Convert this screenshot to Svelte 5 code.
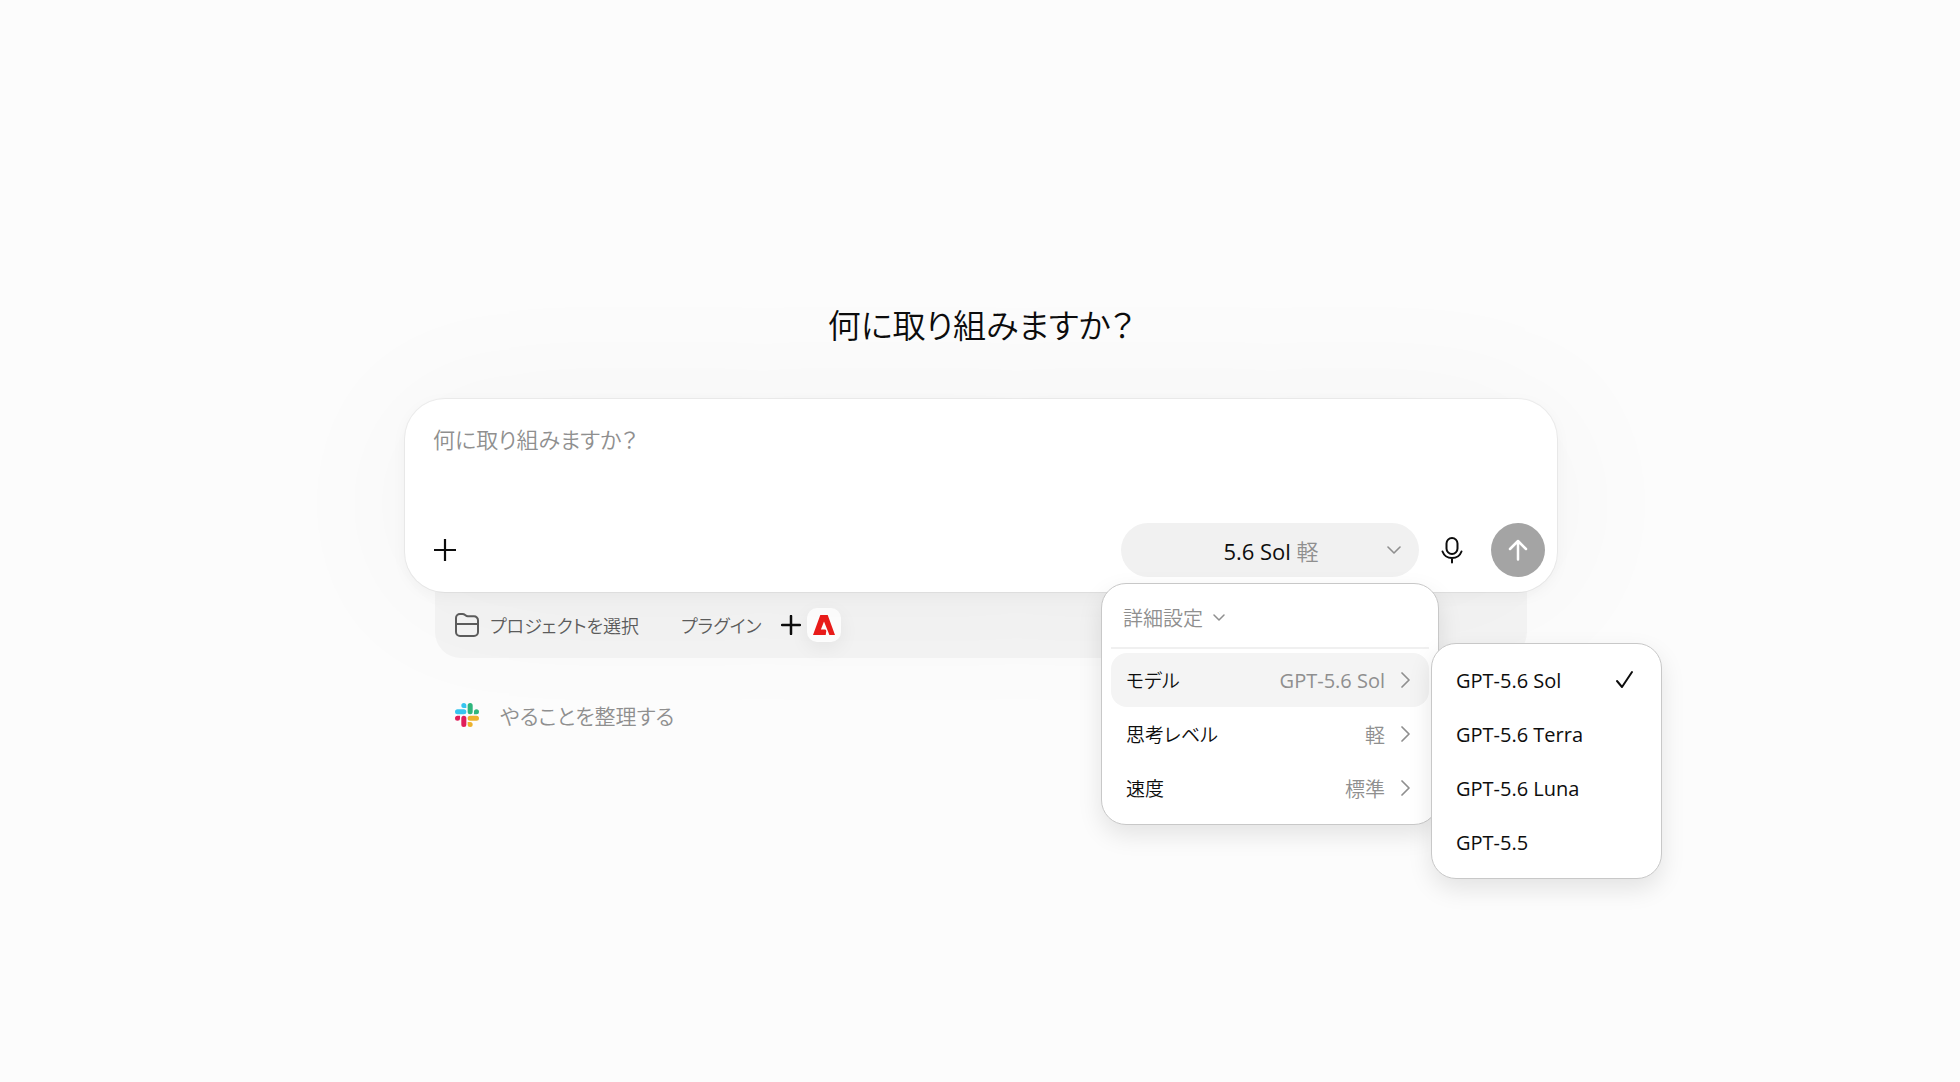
<script>
  const models = ['GPT-5.6 Sol', 'GPT-5.6 Terra', 'GPT-5.6 Luna', 'GPT-5.5'];

  let prompt = $state('');
  let menuOpen = $state(true);
  let activeRow = $state('model');
  let model = $state('GPT-5.6 Sol');

  // Rows of the settings menu
  let rows = $derived([
    { id: 'model', label: 'モデル', value: model },
    { id: 'effort', label: '思考レベル', value: '軽' },
    { id: 'speed', label: '速度', value: '標準' }
  ]);

  function toggleMenu() {
    menuOpen = !menuOpen;
  }

  function pickModel(name) {
    model = name;
  }
</script>

<main class="page">
  <h1>何に取り組みますか？</h1>

  <div class="composer">
    <form class="card" onsubmit={(e) => e.preventDefault()}>
      <textarea
        bind:value={prompt}
        rows="1"
        aria-label="何に取り組みますか？"
        placeholder="何に取り組みますか？"
      ></textarea>

      <div class="tools">
        <button type="button" class="icon-button" aria-label="追加">
          <svg width="24" height="24" viewBox="0 0 24 24">
            <path d="M12 1v22M1 12h22" stroke="currentColor" stroke-width="2.2" />
          </svg>
        </button>

        <div class="right">
          <div class="picker">
            <button type="button" class="pill" aria-expanded={menuOpen} onclick={toggleMenu}>
              <span class="pill-text">{model.replace('GPT-', '')} <span class="muted">軽</span></span>
              <svg class="pill-arrow" width="14" height="10" viewBox="0 0 14 10">
                <path d="M1 2l6 6 6-6" fill="none" stroke="currentColor" stroke-width="1.6" stroke-linecap="round" stroke-linejoin="round" />
              </svg>
            </button>

            {#if menuOpen}
              <div class="menu">
                <button type="button" class="menu-head">
                  詳細設定
                  <svg width="12" height="8" viewBox="0 0 12 8">
                    <path d="M1 1l5 5 5-5" fill="none" stroke="currentColor" stroke-width="1.5" stroke-linecap="round" stroke-linejoin="round" />
                  </svg>
                </button>
                <hr />
                {#each rows as row}
                  <button
                    type="button"
                    class="row"
                    class:active={activeRow === row.id}
                    onmouseenter={() => (activeRow = row.id)}
                  >
                    <span class="label">{row.label}</span>
                    <span class="value" class:model={row.id === 'model'}>{row.value}</span>
                    <svg width="10" height="18" viewBox="0 0 10 18">
                      <path d="M1 2l7 7-7 7" fill="none" stroke="currentColor" stroke-width="1.7" stroke-linecap="round" stroke-linejoin="round" />
                    </svg>
                  </button>
                {/each}

                {#if activeRow === 'model'}
                  <div class="menu submenu">
                    {#each models as name}
                      <button type="button" class="row" onclick={() => pickModel(name)}>
                        <span>{name}</span>
                        {#if name === model}
                          <svg class="check" width="20" height="20" viewBox="0 0 20 20">
                            <path d="M3 11l5 6L18 2" fill="none" stroke="currentColor" stroke-width="2" stroke-linecap="round" stroke-linejoin="round" />
                          </svg>
                        {/if}
                      </button>
                    {/each}
                  </div>
                {/if}
              </div>
            {/if}
          </div>

          <button type="button" class="icon-button" aria-label="音声入力">
            <svg width="24" height="28" viewBox="0 0 24 28" fill="none" stroke="currentColor" stroke-width="2" stroke-linecap="round">
              <rect x="6.5" y="2" width="11" height="16" rx="5.5" />
              <path d="M2.500 15.500c1.500 4 5 6.500 9.500 6.500s8-2.500 9.500-6.500M12 22v4.500" />
            </svg>
          </button>

          <button type="submit" class="send" aria-label="送信">
            <svg width="24" height="24" viewBox="0 0 24 24">
              <path d="M12 21.500V3M4 11l8-8 8 8" fill="none" stroke="currentColor" stroke-width="2.500" stroke-linecap="round" stroke-linejoin="round" />
            </svg>
          </button>
        </div>
      </div>
    </form>

    <div class="bar">
      <button type="button" class="bar-button">
        <svg width="26" height="26" viewBox="0 0 26 26" fill="none" stroke="currentColor" stroke-width="2" stroke-linejoin="round">
          <path d="M2 6a4 4 0 0 1 4-4h2.500c1 0 1.800.3 2.600 1l.7.6c.6.5 1.200.7 2 .7H20a4 4 0 0 1 4 4V20a4 4 0 0 1-4 4H6a4 4 0 0 1-4-4z" />
          <path d="M2 12h22" />
        </svg>
        プロジェクトを選択
      </button>
      <button type="button" class="bar-button plugins">
        プラグイン
        <svg class="plus" width="20" height="20" viewBox="0 0 20 20">
          <path d="M10 1v18M1 10h18" stroke="currentColor" stroke-width="2.500" stroke-linecap="round" />
        </svg>
        <span class="plugin">
          <svg width="22" height="20" viewBox="0 0 22 20">
            <path d="M7.300 0h7.400L22 20h-5.600L11 6.500 7.900 14.500h3.500c1.100 0 1.600.5 1.900 1.400l-.6 4.100H0z" fill="#eb1c1a" />
          </svg>
        </span>
      </button>
    </div>
  </div>

  <button type="button" class="suggestion">
    <svg width="24" height="24" viewBox="0 0 24 24">
      <path fill="#e01e5a" d="M5.042 15.165a2.528 2.528 0 0 1-2.520 2.523A2.528 2.528 0 0 1 0 15.165a2.527 2.527 0 0 1 2.522-2.520h2.520v2.520zM6.313 15.165a2.527 2.527 0 0 1 2.521-2.520 2.527 2.527 0 0 1 2.521 2.520v6.313A2.528 2.528 0 0 1 8.834 24a2.528 2.528 0 0 1-2.521-2.522v-6.313z" />
      <path fill="#36c5f0" d="M8.834 5.042a2.528 2.528 0 0 1-2.521-2.520A2.528 2.528 0 0 1 8.834 0a2.528 2.528 0 0 1 2.521 2.522v2.520H8.834zM8.834 6.313a2.528 2.528 0 0 1 2.521 2.521 2.528 2.528 0 0 1-2.521 2.521H2.522A2.528 2.528 0 0 1 0 8.834a2.528 2.528 0 0 1 2.522-2.521h6.312z" />
      <path fill="#2eb67d" d="M18.956 8.834a2.528 2.528 0 0 1 2.522-2.521A2.528 2.528 0 0 1 24 8.834a2.528 2.528 0 0 1-2.522 2.521h-2.522V8.834zM17.688 8.834a2.528 2.528 0 0 1-2.523 2.521 2.527 2.527 0 0 1-2.520-2.521V2.522A2.527 2.527 0 0 1 15.165 0a2.528 2.528 0 0 1 2.523 2.522v6.312z" />
      <path fill="#ecb22e" d="M15.165 18.956a2.528 2.528 0 0 1 2.523 2.522A2.528 2.528 0 0 1 15.165 24a2.527 2.527 0 0 1-2.520-2.522v-2.522h2.520zM15.165 17.688a2.527 2.527 0 0 1-2.520-2.523 2.526 2.526 0 0 1 2.520-2.520h6.313A2.527 2.527 0 0 1 24 15.165a2.528 2.528 0 0 1-2.522 2.523h-6.313z" />
    </svg>
    やることを整理する
  </button>
</main>

<style>
  :global(body) {
    background: #fcfcfc;
  }

  .page {
    box-sizing: border-box;
    max-width: 1202px;
    min-height: 100vh;
    margin: 0 auto;
    padding: 300px 24px 64px 26px;
    font-family: 'Open Sans', 'Noto Sans CJK JP', sans-serif;
    font-feature-settings: 'palt';
    font-size: 20px;
    color: #0d0d0d;
  }

  h1 {
    margin: 0 0 47px;
    font-size: 33px;
    font-weight: 350;
    line-height: 52px;
    text-align: center;
  }

  button,
  textarea {
    font: inherit;
    font-feature-settings: inherit;
    color: inherit;
  }

  button {
    display: flex;
    align-items: center;
    padding: 0;
    border: 0;
    background: none;
    cursor: pointer;
  }

  svg {
    flex: none;
  }

  .card {
    position: relative;
    z-index: 1;
    box-sizing: border-box;
    padding: 22px 12px 15px 28px;
    border-radius: 40px;
    background: #fff;
    box-shadow:
      0 0 0 1px rgba(0, 0, 0, 0.05),
      0 4px 16px rgba(0, 0, 0, 0.04),
      0 8px 160px rgba(0, 0, 0, 0.04);
  }

  textarea {
    display: block;
    box-sizing: border-box;
    width: 100%;
    height: 102px;
    padding: 0;
    border: 0;
    outline: none;
    resize: none;
    background: none;
    font-size: 22px;
    font-weight: 350;
    line-height: 36px;
  }

  textarea::placeholder {
    color: #8f8f8f;
    opacity: 1;
  }

  .tools,
  .right {
    display: flex;
    align-items: center;
  }

  .tools {
    justify-content: space-between;
  }

  .picker {
    position: relative;
  }

  .pill {
    width: 298px;
    height: 54px;
    padding: 0 18px;
    border-radius: 27px;
    background: #f1f1f1;
    font-size: 22px;
  }

  .pill-text {
    flex: 1;
    padding-left: 16px;
  }

  .pill-arrow,
  .muted {
    color: #8f8f8f;
  }

  .muted {
    font-weight: 350;
  }

  .icon-button {
    justify-content: center;
    width: 24px;
    height: 54px;
  }

  .right .icon-button {
    width: 66px;
    margin-right: 6px;
  }

  .send {
    justify-content: center;
    width: 54px;
    height: 54px;
    border-radius: 50%;
    background: #a4a4a4;
    color: #fff;
  }

  .menu {
    position: absolute;
    top: 60px;
    left: -20px;
    z-index: 2;
    box-sizing: border-box;
    width: 338px;
    padding: 0 9px 9px;
    border: 1px solid #c8c8c8;
    border-radius: 25px;
    background: #fff;
    box-shadow: 0 10px 24px rgba(0, 0, 0, 0.1);
  }

  .submenu {
    top: 59px;
    left: 329px;
    width: 231px;
    padding: 9px;
  }

  .menu-head {
    gap: 10px;
    width: 100%;
    height: 63px;
    padding: 4px 12px 0;
    color: #8f8f8f;
    font-weight: 350;
  }

  hr {
    height: 2px;
    margin: 0 0 4px;
    border: 0;
    background: #f0f0f0;
  }

  .row {
    justify-content: space-between;
    width: 100%;
    height: 54px;
    padding: 0 18px 0 15px;
    border-radius: 16px;
    font-weight: 400;
  }

  .row.active {
    background: #f4f4f4;
  }

  .label {
    font-size: 19px;
    font-weight: 350;
  }

  .value {
    margin-left: auto;
    padding-right: 16px;
    color: #8f8f8f;
    font-weight: 350;
  }

  .value.model {
    font-weight: 400;
  }

  .row svg {
    color: #8f8f8f;
  }

  .row .check {
    color: #0d0d0d;
  }

  .bar {
    display: flex;
    align-items: center;
    height: 66px;
    margin: 0 30px;
    padding: 0 19px;
    border-radius: 0 0 26px 26px;
    background: #f4f4f4;
  }

  .bar-button {
    gap: 10px;
    color: #5d5d5d;
    font-size: 18px;
    font-weight: 350;
  }

  .plugins {
    gap: 6px;
    margin-left: 42px;
  }

  .plus {
    margin-left: 14px;
    color: #0d0d0d;
  }

  .plugin {
    display: flex;
    align-items: center;
    justify-content: center;
    width: 34px;
    height: 34px;
    border-radius: 10px;
    background: #fff;
    box-shadow: 0 6px 20px rgba(0, 0, 0, 0.06);
  }

  .suggestion {
    gap: 21px;
    margin: 38px 0 0 50px;
    height: 38px;
    color: #8f8f8f;
    font-size: 21px;
    font-weight: 350;
  }
</style>
